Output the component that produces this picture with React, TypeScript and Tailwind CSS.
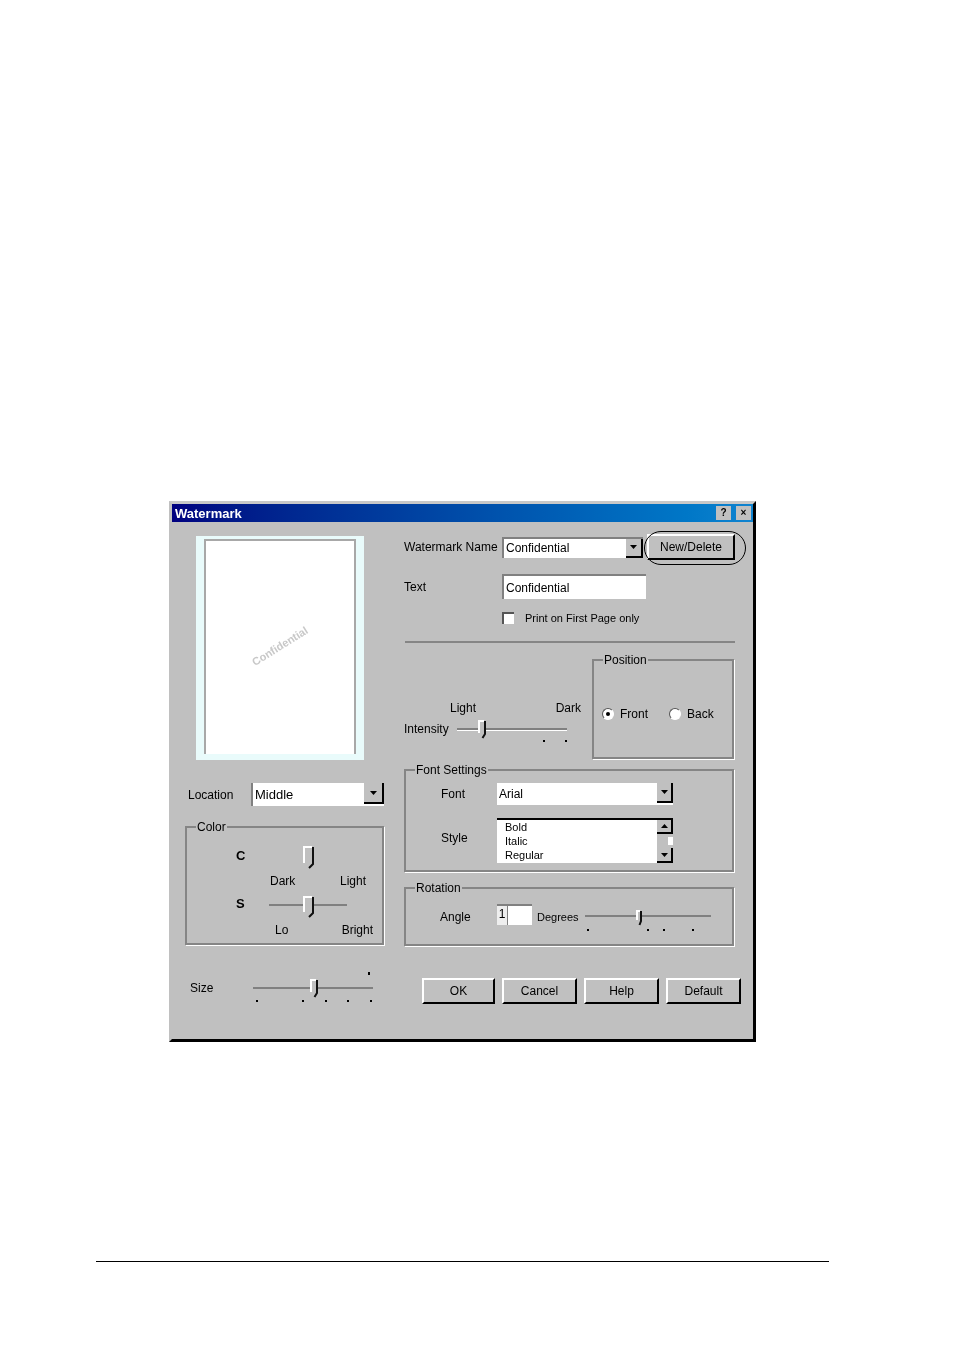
const ui = { fontFamily: '"Liberation Sans", Arial, sans-serif' }

type SliderProps = {
  width: number
  thumb: number
  ticks: number[]
  trackClass?: string
  thumbW?: number
  thumbH?: number
  thumbTop?: number
  tickTop?: number
}

function Thumb({ w, h }: { w: number; h: number }) {
  const mid = w / 2
  return (
    <svg width={w} height={h} viewBox={`0 0 ${w} ${h}`} className="block">
      <path d={`M1 1H${w - 2}V${h - 6}L${mid} ${h - 2}L2 ${h - 6}V1Z`} fill="#c0c0c0" />
      <path d={`M1 ${h - 6}V1H${w - 3}`} stroke="#fff" strokeWidth="2" fill="none" />
      <path d={`M${w - 2} 1V${h - 5}L${mid} ${h - 1}`} stroke="#111" strokeWidth="2" fill="none" />
    </svg>
  )
}

// track, thumb and tick dots of a trackbar
function Slider({ width, thumb, ticks, trackClass = 'bg-[#808080]', thumbW = 9, thumbH = 19, thumbTop = 2, tickTop = 22 }: SliderProps) {
  return (
    <div className="relative h-[24px] pt-[10px]" style={{ width }}>
      <div className={`h-[2px] w-full ${trackClass}`} />
      <div className="absolute" style={{ left: thumb, top: thumbTop }}>
        <Thumb w={thumbW} h={thumbH} />
      </div>
      {ticks.map((t) => (
        <span key={t} className="absolute h-[2px] w-[2px] bg-black" style={{ left: t, top: tickTop }} />
      ))}
    </div>
  )
}

function Arrow({ up }: { up?: boolean }) {
  return (
    <svg width="7" height="4" viewBox="0 0 7 4">
      <path d={up ? 'M3.5 0L7 4H0Z' : 'M0 0H7L3.5 4Z'} fill="#000" />
    </svg>
  )
}

function ArrowButton({ className = '', up }: { className?: string; up?: boolean }) {
  return (
    <div className={`flex shrink-0 items-center justify-center border-r-2 border-b-2 border-black bg-[#c0c0c0] ${className}`}>
      <Arrow up={up} />
    </div>
  )
}

function WinButton({ label, className = '' }: { label: string; className?: string }) {
  return (
    <button
      type="button"
      className={`flex h-[26px] items-center justify-center border-2 border-t-white border-l-white border-r-black border-b-black bg-[#c0c0c0] text-[12px] text-black ${className}`}
    >
      {label}
    </button>
  )
}

function Group({ title, className = '', children }: { title: string; className?: string; children: React.ReactNode }) {
  return (
    <fieldset className={`border-2 border-[#858585] shadow-[1px_1px_0_#fff] ${className}`}>
      <legend className="ml-[9px] px-[1px] text-[12px] leading-[12px] text-black">{title}</legend>
      {children}
    </fieldset>
  )
}

function Radio({ on, label }: { on?: boolean; label: string }) {
  return (
    <div className="flex items-center gap-[6px]">
      <span className="flex h-[12px] w-[12px] items-center justify-center rounded-full border border-t-[#555] border-l-[#555] border-r-white border-b-white bg-white">
        {on && <span className="h-[4px] w-[4px] rounded-full bg-black" />}
      </span>
      <span>{label}</span>
    </div>
  )
}

export default function App() {
  return (
    <div className="h-[1355px] overflow-hidden bg-white pt-[501px] pl-[169px]" style={ui}>
      <div className="flex h-[541px] w-[587px] flex-col border-t-[3px] border-r-[3px] border-b-[3px] border-l-[3px] border-t-[#c8c8c8] border-r-black border-b-black border-l-[#c0c0c0] bg-[#c0c0c0] text-[12px] leading-[14px] text-black blur-[0.45px]">
        <div className="flex h-[18px] shrink-0 items-center justify-between bg-gradient-to-r from-[#000080] to-[#1084d0] pr-[2px] pl-[3px]">
          <span className="text-[13px] leading-none font-bold text-white">Watermark</span>
          <div className="flex gap-[5px]">
            <span className="flex h-[14px] w-[15px] items-center justify-center bg-[#c0c0c0] text-[10px] leading-none font-bold">?</span>
            <span className="flex h-[14px] w-[15px] items-center justify-center bg-[#c0c0c0] text-[10px] leading-none font-bold">×</span>
          </div>
        </div>

        <div className="flex pl-[13px]">
          {/* left column */}
          <div className="w-[199px] shrink-0">
            <div className="mt-[14px] ml-[11px] h-[224px] w-[168px] bg-[#e9fbfb] px-[8px] pt-[3px] pb-[6px]">
              <div className="flex h-full items-center justify-center border-x-2 border-t-2 border-[#a8a8a8] bg-white">
                <span className="-translate-y-[2px] -rotate-[32deg] text-[11px] font-bold text-[#c8c8c8]">Confidential</span>
              </div>
            </div>

            <div className="mt-[23px] flex items-center pl-[3px]">
              <span className="w-[63px]">Location</span>
              <div className="flex h-[23px] flex-1 justify-between border-l-2 border-[#808080] bg-white pl-[2px]">
                <span className="self-center text-[13px]">Middle</span>
                <ArrowButton className="h-[21px] w-[20px]" />
              </div>
            </div>

            <Group title="Color" className="mt-[15px] h-[124px] w-[199px]">
              <div className="flex items-start pt-[11px] pl-[49px]">
                <span className="mt-[5px] w-[33px] text-[13px] font-bold">C</span>
                <Slider width={78} thumb={34} ticks={[]} trackClass="bg-transparent" thumbW={12} thumbH={23} />
              </div>
              <div className="mt-[6px] flex w-full justify-between pr-[16px] pl-[83px]">
                <span>Dark</span>
                <span>Light</span>
              </div>
              <div className="mt-[6px] flex items-start pl-[49px]">
                <span className="mt-[3px] w-[33px] text-[13px] font-bold">S</span>
                <Slider width={78} thumb={34} ticks={[]} thumbW={12} thumbH={22} />
              </div>
              <div className="mt-[5px] flex w-full justify-between pr-[9px] pl-[88px]">
                <span>Lo</span>
                <span>Bright</span>
              </div>
            </Group>

            <div className="mt-[32px] flex items-start pl-[5px]">
              <span className="mt-[4px] w-[63px]">Size</span>
              <div className="relative">
                <Slider width={120} thumb={57} ticks={[3, 49, 72, 94, 117]} tickTop={23} />
                <span className="absolute -top-[5px] left-[115px] h-[3px] w-[2px] bg-black" />
              </div>
            </div>
          </div>

          {/* right column */}
          <div className="ml-[20px] w-[340px] shrink-0">
            <div className="mt-[12px] flex w-[331px] items-center">
              <span className="w-[98px] text-[12px]">Watermark Name</span>
              <div className="flex h-[21px] w-[141px] justify-between border-t-2 border-l-2 border-[#808080] bg-white pl-[2px]">
                <span className="self-center">Confidential</span>
                <ArrowButton className="h-[19px] w-[17px] border-r border-b border-[#808080]" />
              </div>
              <div className="relative ml-[4px]">
                <WinButton label="New/Delete" className="w-[88px]" />
                <div className="absolute -top-[3px] -right-[11px] -bottom-[5px] -left-[3px] rounded-full border border-black" />
              </div>
            </div>

            <div className="mt-[14px] flex items-center">
              <span className="w-[98px]">Text</span>
              <div className="flex h-[25px] w-[144px] items-center border-t-2 border-l-2 border-[#808080] bg-white pl-[2px]">Confidential</div>
            </div>

            <div className="mt-[12px] flex items-center pl-[98px]">
              <span className="h-[12px] w-[12px] border-t-2 border-l-2 border-[#555] bg-white" />
              <span className="ml-[11px] text-[11px]">Print on First Page only</span>
            </div>

            <div className="mt-[16px] ml-[1px] h-[2px] w-[330px] bg-[#858585]" />

            <div className="mt-[11px] flex items-start">
              <div className="w-[188px] shrink-0">
                <div className="mt-[47px] flex justify-between pr-[11px] pl-[46px]">
                  <span>Light</span>
                  <span>Dark</span>
                </div>
                <div className="mt-[3px] flex items-start">
                  <span className="mt-[4px] w-[53px]">Intensity</span>
                  <Slider width={110} thumb={21} ticks={[86, 108]} trackClass="bg-[#808080] shadow-[0_1px_0_#fff]" />
                </div>
              </div>
              <Group title="Position" className="h-[105px] w-[142px]">
                <div className="flex gap-[21px] pt-[41px] pl-[8px]">
                  <Radio on label="Front" />
                  <Radio label="Back" />
                </div>
              </Group>
            </div>

            <Group title="Font Settings" className="mt-[5px] h-[108px] w-[330px]">
              <div className="flex items-center pt-[7px] pl-[35px]">
                <span className="w-[56px]">Font</span>
                <div className="flex h-[22px] w-[176px] justify-between bg-white pl-[2px]">
                  <span className="self-center">Arial</span>
                  <ArrowButton className="h-[20px] w-[16px]" />
                </div>
              </div>
              <div className="mt-[13px] flex items-center pl-[35px]">
                <span className="mb-[5px] w-[56px]">Style</span>
                <div className="flex h-[45px] w-[176px] justify-between border-t-2 border-black bg-white pl-[8px]">
                  <div className="text-[11px] leading-[14px]">
                    <div>Bold</div>
                    <div>Italic</div>
                    <div>Regular</div>
                  </div>
                  <div className="flex w-[16px] flex-col">
                    <ArrowButton up className="h-[14px] w-[16px] border-r-0 border-b-0" />
                    <div className="flex h-[14px] justify-end bg-[#c0c0c0] py-[3px]">
                      <span className="w-[5px] bg-white" />
                    </div>
                    <ArrowButton className="h-[15px] w-[16px]" />
                  </div>
                </div>
              </div>
            </Group>

            <Group title="Rotation" className="mt-[10px] h-[64px] w-[330px]">
              <div className="flex items-start pt-[9px] pl-[34px]">
                <span className="mt-[7px] w-[57px]">Angle</span>
                <div className="mt-[1px] flex h-[21px] w-[35px] border-t-2 border-[#808080] bg-white">
                  <span className="w-[11px] border-r border-[#808080] bg-[#eee] text-center leading-[16px]">1</span>
                </div>
                <span className="mt-[7px] ml-[5px] w-[48px] text-[11px]">Degrees</span>
                <div className="mt-[2px]">
                  <Slider width={126} thumb={51} ticks={[2, 62, 78, 107]} thumbW={7} thumbH={16} thumbTop={5} tickTop={24} />
                </div>
              </div>
            </Group>

            <div className="mt-[32px] flex pl-[18px]">
              <WinButton label="OK" className="w-[73px]" />
              <WinButton label="Cancel" className="ml-[7px] w-[75px]" />
              <WinButton label="Help" className="ml-[7px] w-[75px]" />
              <WinButton label="Default" className="ml-[7px] w-[75px]" />
            </div>
          </div>
        </div>
      </div>

      <div className="mt-[219px] -ml-[73px] h-[1px] w-[733px] bg-black" />
    </div>
  )
}
